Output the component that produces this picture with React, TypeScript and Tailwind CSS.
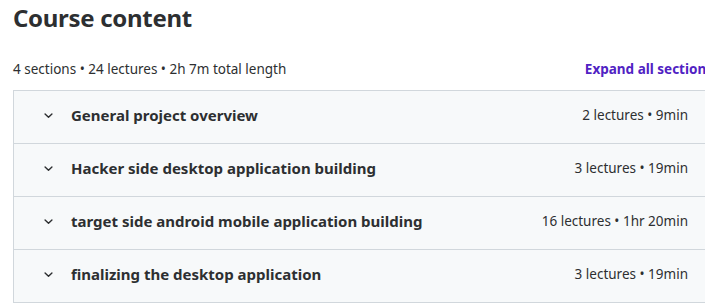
import React from "react";

const sections = [
  { title: "General project overview", meta: "2 lectures • 9min" },
  { title: "Hacker side desktop application building", meta: "3 lectures • 19min" },
  { title: "target side android mobile application building", meta: "16 lectures • 1hr 20min" },
  { title: "finalizing the desktop application", meta: "3 lectures • 19min" },
];

function Chevron() {
  return (
    <svg width="11" height="11" viewBox="0 0 24 24" className="text-[#2d2f31]">
      <path d="M4.5 8.5l7.5 7.5 7.5-7.5" fill="none" stroke="currentColor" strokeWidth="3" strokeLinecap="round" strokeLinejoin="round" />
    </svg>
  );
}

export default function App() {
  return (
    <div className="w-[705px] h-[303px] overflow-hidden bg-white" style={{ fontFamily: '"Noto Sans", sans-serif' }}>
      <div className="ml-[13px] w-[700px] text-[#2d2f31]">
        <h2 className="text-[24px] font-bold leading-[36px] tracking-[-0.3px]">Course content</h2>
        <div className="flex items-center justify-between h-[32px] mt-[17px] mb-[5px]">
          <span className="text-[13.5px]">4 sections • 24 lectures • 2h 7m total length</span>
          <span className="text-[13.5px] font-bold text-[#5022c3]">Expand all sections</span>
        </div>
        <div className="border-x border-b border-[#d1d7dc]">
          {sections.map((s, i) => (
            <div
              key={i}
              className="flex items-center h-[53px] bg-[#f7f9fa] pl-[29px] pr-[24px] pb-[3px] border-t border-[#d1d7dc]"
            >
              <Chevron />
              <span className="ml-[17px] text-[15px] font-bold flex-1">{s.title}</span>
              <span className="text-[13.5px]">{s.meta}</span>
            </div>
          ))}
        </div>
      </div>
    </div>
  );
}
